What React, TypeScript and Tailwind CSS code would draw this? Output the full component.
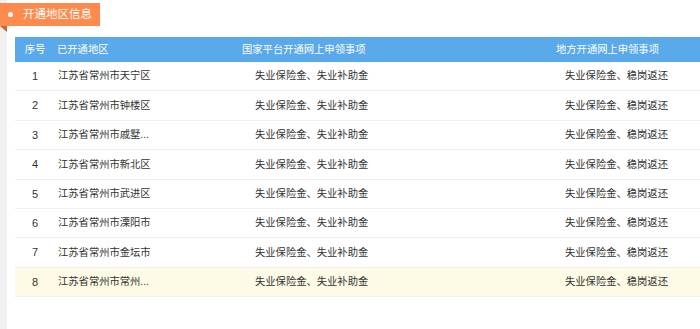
import React from "react";

const rows = [
  ["1", "江苏省常州市天宁区"],
  ["2", "江苏省常州市钟楼区"],
  ["3", "江苏省常州市戚墅..."],
  ["4", "江苏省常州市新北区"],
  ["5", "江苏省常州市武进区"],
  ["6", "江苏省常州市溧阳市"],
  ["7", "江苏省常州市金坛市"],
  ["8", "江苏省常州市常州..."],
];

export default function App() {
  return (
    <div
      className="w-[700px] h-[329px] bg-white overflow-hidden"
      style={{ fontFamily: '"Liberation Sans", "Noto Sans CJK SC", sans-serif' }}
    >
      <div className="h-full border-l-[7px] border-[#f1f1f1] pt-[3px]">
        <div className="-ml-[7px] flex flex-col">
          <div className="flex h-[23px] w-[100px] items-center bg-[#fd8b4e] text-white">
            <span className="ml-[8px] h-[5px] w-[5px] rounded-full bg-white" />
            <span className="ml-[10px] text-[11.5px] leading-none">开通地区信息</span>
          </div>
          <svg width="7" height="6" viewBox="0 0 7 6" className="block">
            <polygon points="0,0 7,0 7,6" fill="#c8662f" />
          </svg>
        </div>
        <div className="ml-[8px] mt-[5px]">
          <div className="grid h-[25px] grid-cols-[40px_187px_314px_1fr] items-center bg-[#5aa9eb] text-[10.3px] text-white">
            <div className="text-center">序号</div>
            <div className="pl-[2px]">已开通地区</div>
            <div>国家平台开通网上申领事项</div>
            <div>地方开通网上申领事项</div>
          </div>
          {rows.map(([n, name], i) => (
            <div
              key={n}
              className={`grid h-[29.4px] grid-cols-[40px_187px_314px_1fr] items-center border-b border-[#eeeeee] text-[10.3px] text-[#333333] ${
                i === 7 ? "bg-[#fdfbe5]" : "bg-white"
              }`}
            >
              <div className="text-center text-[11px]">{n}</div>
              <div className="pl-[3px]">{name}</div>
              <div className="pl-[13px]">失业保险金、失业补助金</div>
              <div className="pl-[9px]">失业保险金、稳岗返还</div>
            </div>
          ))}
        </div>
      </div>
    </div>
  );
}
